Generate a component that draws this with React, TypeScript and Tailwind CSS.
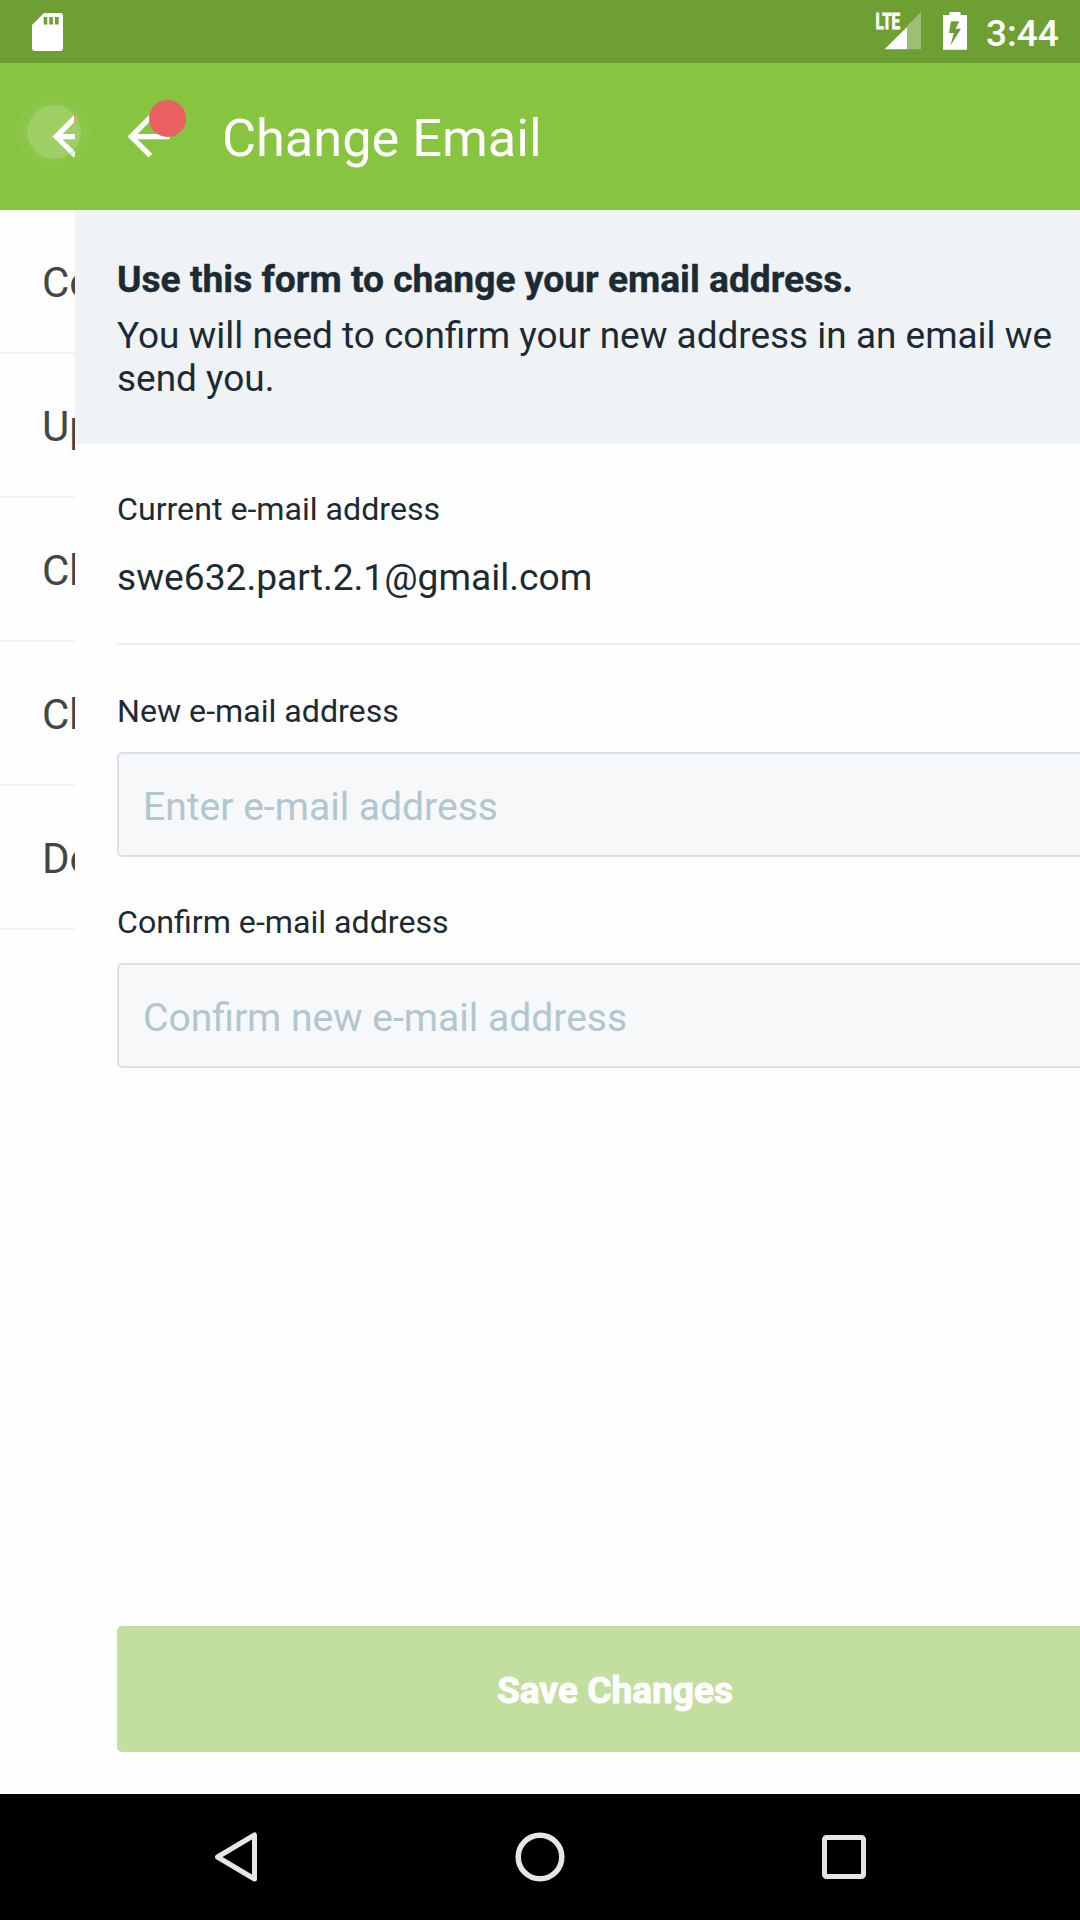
import React from "react";

const ArrowIcon = () => (
  <svg viewBox="0 0 24 24" className="h-[63px] w-[63px] shrink-0" fill="white">
    <path d="M20 11H7.83l5.59-5.59L12 4l-8 8 8 8 1.41-1.41L7.83 13H20v-2z" />
  </svg>
);

function BackButton() {
  return (
    <div className="relative h-[63px] w-[63px] shrink-0">
      <ArrowIcon />
      <span className="absolute -top-[5px] left-[32.5px] h-[37px] w-[37px] rounded-full bg-[#ea5f5f]" />
    </div>
  );
}

function StatusBar() {
  return (
    <div className="flex h-[63px] items-start bg-[#6d9f33] text-white">
      <svg viewBox="0 0 31 38" className="mt-[12.5px] ml-[32px] h-[38px] w-[31px]">
        <path
          fill="white"
          fillRule="evenodd"
          d="M12 0H28a3 3 0 0 1 3 3V35a3 3 0 0 1-3 3H3a3 3 0 0 1-3-3V12ZM11.7 4v7.5h3.6V4ZM17.3 4v7.5h3.6V4ZM22.9 4v7.5h3.8V4Z"
        />
      </svg>
      <svg viewBox="0 0 46 38" className="mt-[12px] ml-[812px] h-[38px] w-[46px] overflow-visible">
        <path fill="#9cbf74" d="M46 0V37.3H32V14Z" />
        <path fill="white" d="M32 15V37.3H9.5Z" />
        <text x="0.6" y="17" fontSize="22" fontWeight="700" textLength="24.6" lengthAdjust="spacingAndGlyphs" fill="white" stroke="white" strokeWidth="0.8">
          LTE
        </text>
      </svg>
      <svg viewBox="0 0 24 38" className="mt-[12px] ml-[22px] h-[38px] w-[24px]">
        <path
          fill="white"
          fillRule="evenodd"
          d="M6.5 0h11v3H24V37.7H0V3H6.5ZM8 9.3L6 21H10.8L7.5 33.5L18 16.8H12.6L16.3 9.3Z"
        />
      </svg>
      <span className="mt-[12px] ml-[19px] text-[37px] leading-[43px] font-medium">3:44</span>
    </div>
  );
}

function Toolbar() {
  return (
    <div className="relative flex h-[147px] bg-[#87c440]">
      <div className="flex w-[75px] items-center overflow-hidden pl-[41.5px]">
        <BackButton />
      </div>
      <div className="flex flex-1 items-center pl-[41.5px]">
        <BackButton />
        <h1 className="mt-[3px] ml-[42.5px] text-[52.3px] leading-[62px] font-normal text-white">Change Email</h1>
      </div>
      <span className="absolute top-[32px] left-[17px] h-[74px] w-[74px] rounded-full bg-white/5 blur-[4px]" />
      <span className="absolute top-[41px] left-[26px] h-[56px] w-[56px] rounded-full border border-[#7cb43c]/50 bg-white/15" />
    </div>
  );
}

function SettingsList() {
  const items = ["Co", "Up", "Ch", "Ch", "De"];
  return (
    <div className="w-[75px] shrink-0 overflow-hidden">
      {items.map((item, i) => (
        <div
          key={i}
          className="flex h-[144px] items-center border-b-[2px] border-[#f4f4f4] pt-[2px] pl-[42px] text-[42px] text-[#444646]"
        >
          {item}
        </div>
      ))}
    </div>
  );
}

function Field({ label, hint }: { label: string; hint: string }) {
  return (
    <div className="flex flex-col">
      <label className="text-[32.15px] leading-[37px]">{label}</label>
      <input
        placeholder={hint}
        className="mt-[22px] h-[105px] w-[996px] rounded-[5px] border-2 border-[#d6e1e9] bg-[#f6f8fa] px-[24px] pt-[4px] text-[39.05px] placeholder:text-[#b0c7d0] placeholder:opacity-100"
      />
    </div>
  );
}

export default function App() {
  return (
    <div className="flex h-[1920px] w-[1080px] flex-col overflow-hidden bg-[#fefefe] font-[Roboto,sans-serif] text-[#1c2b33]">
      <StatusBar />
      <Toolbar />
      <div className="flex flex-1">
        <SettingsList />
        <main className="flex w-[1005px] flex-col overflow-hidden">
          <section className="h-[234px] bg-[#eff3f6] pt-[48px] pl-[42px] text-[36.95px] leading-[43px]">
            <p className="text-[37.2px] font-bold [-webkit-text-stroke:0.4px_#1c2b33]">
              Use this form to change your email address.
            </p>
            <p className="mt-[13px] whitespace-nowrap">
              You will need to confirm your new address in an email we
              <br />
              send you.
            </p>
          </section>
          <div className="flex flex-1 flex-col pl-[42px]">
            <p className="mt-[47px] text-[32.15px] leading-[37px]">Current e-mail address</p>
            <p className="mt-[28px] text-[37.15px] leading-[43px]">swe632.part.2.1@gmail.com</p>
            <div className="mt-[44px] mb-[48px] h-[2px] bg-[#eeeff0]" />
            <Field label="New e-mail address" hint="Enter e-mail address" />
            <div className="h-[47px]" />
            <Field label="Confirm e-mail address" hint="Confirm new e-mail address" />
            <button className="mt-auto mb-[42px] h-[126px] w-[996px] rounded-[5px] bg-[#c3df9f] pt-[3px] text-[37.1px] font-bold text-white [-webkit-text-stroke:0.9px_white]">
              Save Changes
            </button>
          </div>
        </main>
      </div>
      <nav className="flex h-[126px] items-center justify-between bg-black px-[211px]">
        <svg viewBox="0 0 50 50" className="h-[50px] w-[50px]" fill="none" stroke="#e6e6e6" strokeWidth="5" strokeLinejoin="round">
          <path d="M43.5 3V47L6.5 25Z" />
        </svg>
        <svg viewBox="0 0 50 50" className="h-[50px] w-[50px]" fill="none" stroke="#e6e6e6" strokeWidth="5.5">
          <circle cx="25" cy="25" r="21.8" />
        </svg>
        <svg viewBox="0 0 50 50" className="h-[50px] w-[50px]" fill="none" stroke="#e6e6e6" strokeWidth="5">
          <rect x="5.5" y="5.5" width="39" height="39" rx="2" />
        </svg>
      </nav>
    </div>
  );
}
